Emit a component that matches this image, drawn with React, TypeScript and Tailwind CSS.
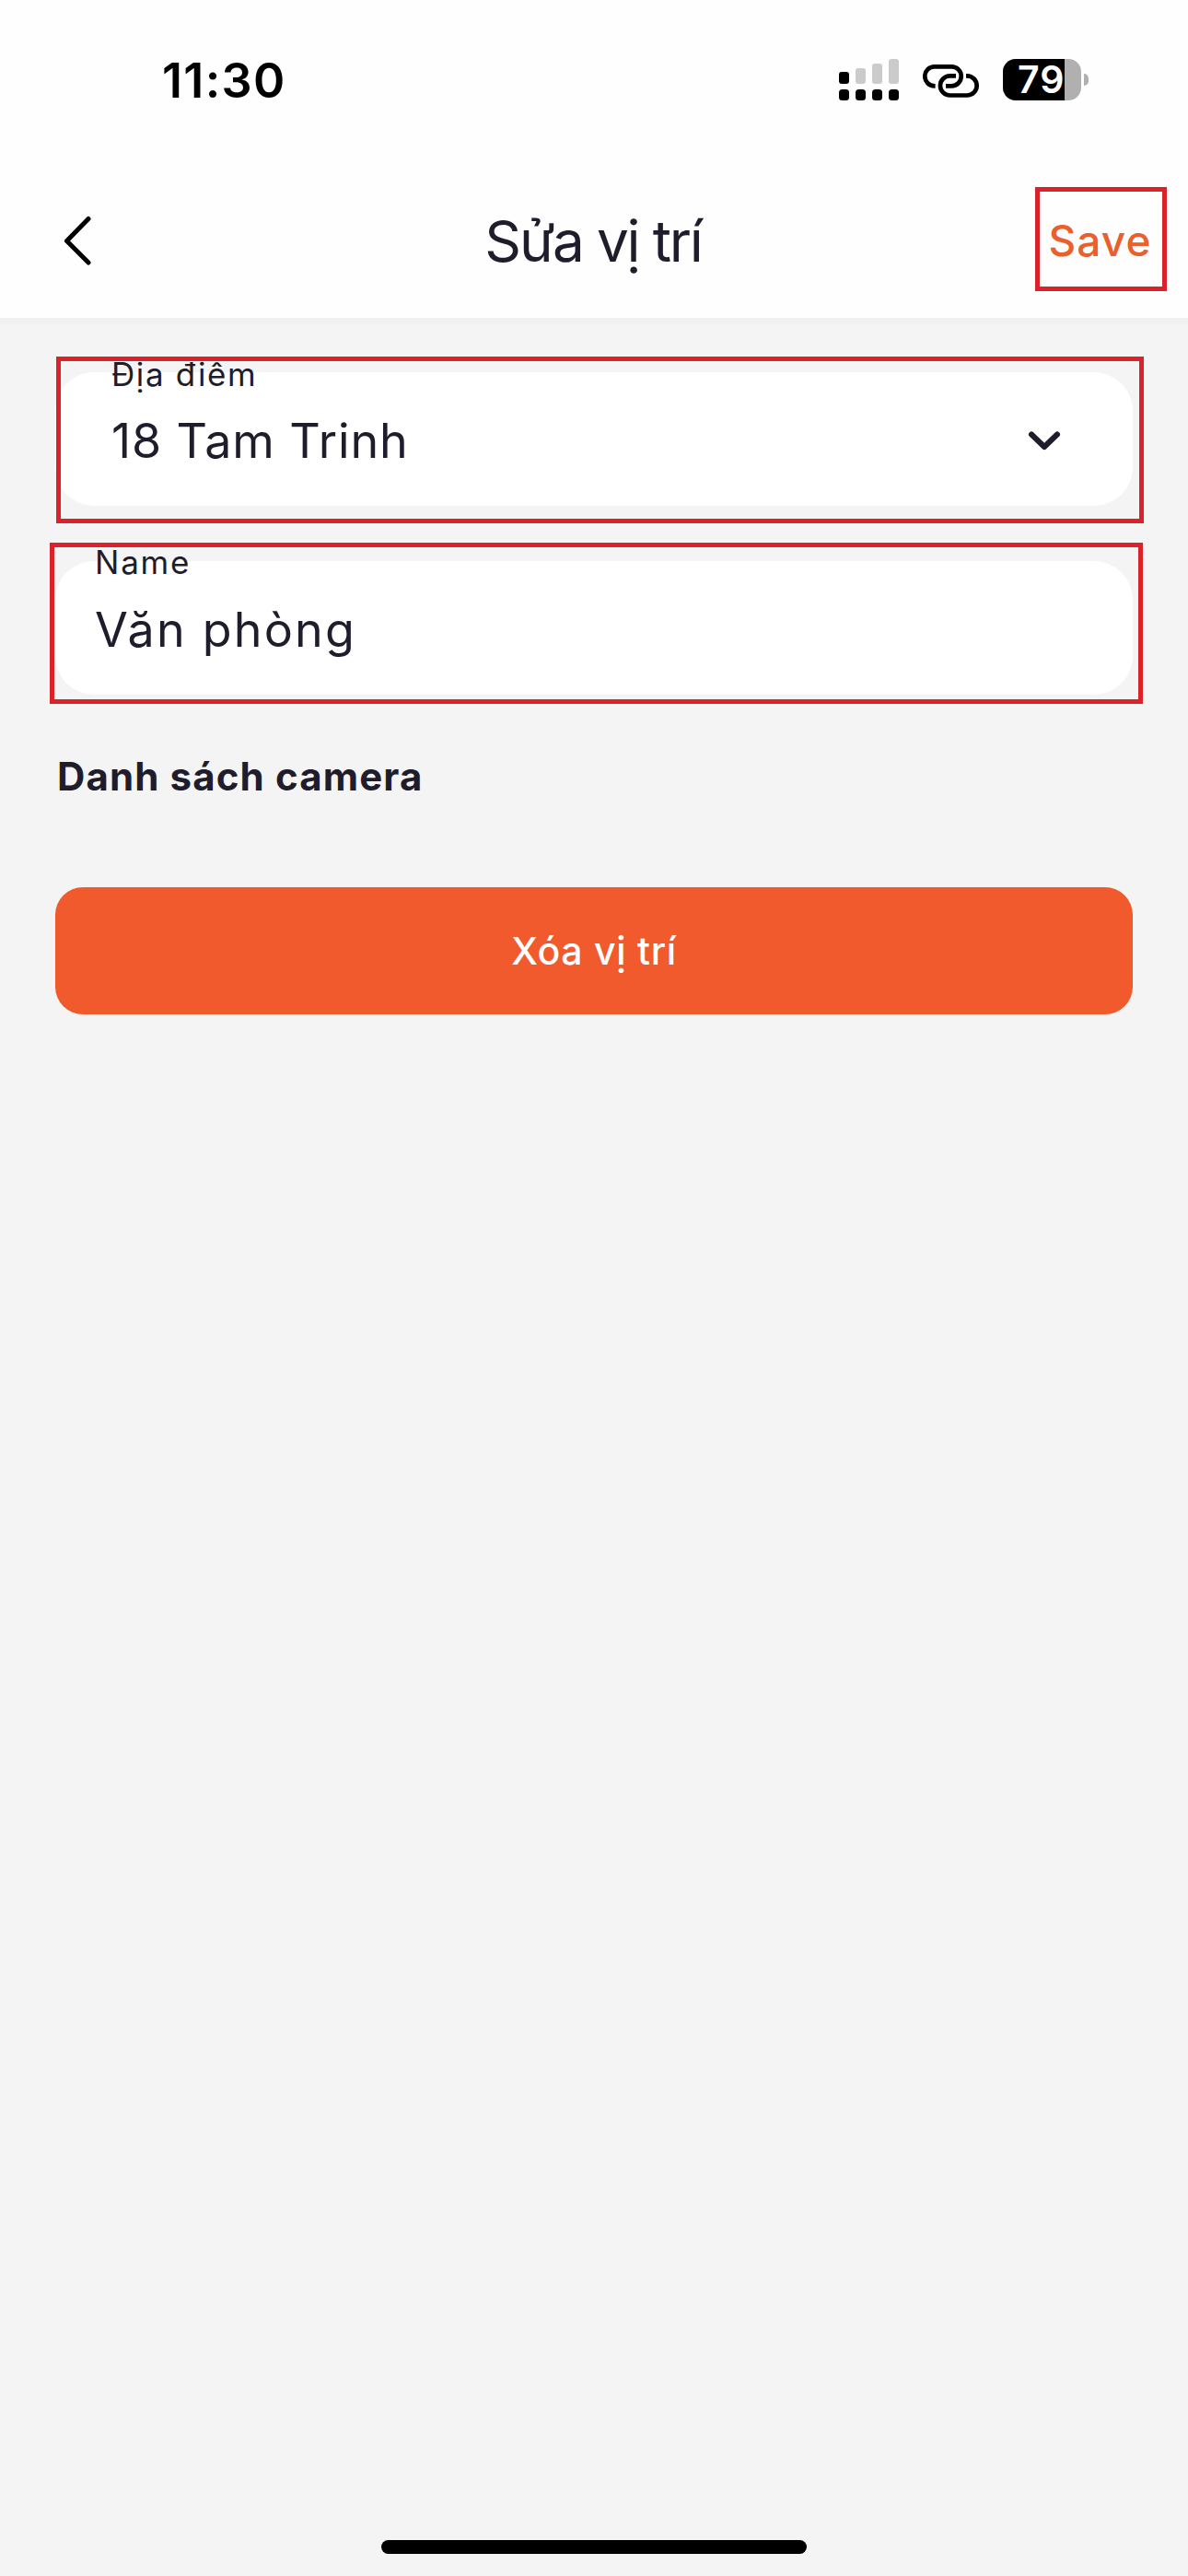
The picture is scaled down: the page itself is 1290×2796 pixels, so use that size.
import { ReactNode, useState } from "react"
import clsx from "clsx"


// // Status bar icons ----->

const signalBars = [
    { x: 0, y: 14, h: 13, on: true },
    { x: 18, y: 10, h: 17, on: false },
    { x: 36, y: 5, h: 22, on: false },
    { x: 54, y: 0, h: 27, on: false },
]

const SignalIcon = () => (
    <svg width="65" height="45" viewBox="0 0 65 45">
        {
            signalBars.map((bar) => (
                <g key={bar.x}>
                    <rect x={bar.x} y={bar.y} width="11" height={bar.h} rx="3" fill={bar.on ? "#000" : "#cbcbcb"} />
                    <rect x={bar.x} y="33" width="11" height="12" rx="3.5" fill="#000" />
                </g>
            ))
        }
    </svg>
)

const LinkIcon = () => (
    <svg width="61" height="36" viewBox="0 0 61 36" fill="none" stroke="#000" strokeWidth="4.7">
        <path d="M13.6 23.3H12.7A10.45 10.45 0 0 1 12.7 2.4H31.3A10.45 10.45 0 0 1 31.3 23.3H25" />
        <path d="M36 12.4H29.5A10.55 10.55 0 0 0 29.5 33.5H48.1A10.55 10.55 0 0 0 48.1 12.4H47" />
    </svg>
)

const Battery = ({ level }: { level: number }) => (
    <div className="flex items-center gap-[3px]">
        <div className="relative flex h-[45px] w-[85px] items-center rounded-[14px] bg-[#b0b0b0] pl-4">
            <div
                className="absolute inset-y-0 left-0 rounded-l-[14px] bg-black"
                style={{ width: `${level}%` }}
            />
            <span className="relative text-[41px] leading-[45px] font-semibold tracking-[1px] text-white">{level}</span>
        </div>
        <div className="h-[13px] w-[5px] rounded-r-full bg-[#b0b0b0]" />
    </div>
)

const StatusBar = () => (
    <div className="flex h-[176px] items-center justify-between pr-[108px] pl-[176px]">
        <p className="text-[52px] leading-[60px] font-semibold tracking-[1.34px] text-black">11:30</p>

        <div className="mb-[3px] flex items-center">
            <SignalIcon />
            <div className="mt-[3px] mr-[26px] ml-[26px]">
                <LinkIcon />
            </div>
            <Battery level={79} />
        </div>
    </div>
)


// // Header with back arrow, title and save ----->

const Header = () => (
    <div className="grid h-[169px] grid-cols-[1fr_auto_1fr] items-center">
        <button className="w-fit pl-[68px]">
            <svg width="32" height="54" viewBox="0 0 32 54" fill="none" stroke="#000" strokeWidth="5" strokeLinecap="round" strokeLinejoin="round">
                <path d="M28 3.5L4.5 27.5L28 51" />
            </svg>
        </button>

        <h1 className="pt-[3px] pr-[2px] text-[62px] leading-[80px] tracking-[-2.2px]">Sửa vị trí</h1>

        <button className="mr-[23px] mb-[2px] flex h-[113px] w-[143px] items-center justify-center justify-self-end border-5 border-[#db222a] pt-[3px] pr-[2px] text-[46px] font-medium tracking-[1.11px] text-[#ea5f2b]">
            Save
        </button>
    </div>
)


type FieldProps = {
    label: string
    value: string
    className?: string
    labelClass: string
    frameClass: string
    icon?: ReactNode
}

const Field = ({ label, value, className, labelClass, frameClass, icon }: FieldProps) => (
    <div className={clsx("relative flex h-[145px] items-center justify-between rounded-[42px] bg-white", className)}>
        <span className={clsx("absolute text-[35px] leading-[42px]", labelClass)}>{label}</span>
        <span className="pt-[4px] text-[52px] leading-[60px]">{value}</span>
        {icon}

        {/* highlight frame, sits above the floating label */}
        <div className={clsx("absolute border-5 border-[#db222a]", frameClass)} />
    </div>
)


const App = () => {

    const [place] = useState("18 Tam Trinh")
    const [name] = useState("Văn phòng")

    return (
        <div className="flex h-[2796px] w-[1290px] flex-col bg-[#f4f4f4] font-['Inter',sans-serif] text-[#1f1d2b]">

            <div className="bg-[#fefefe]">
                <StatusBar />
                <Header />
            </div>
            <div className="h-[7px] bg-[#f0f0f0]" />

            <div className="flex flex-col px-[60px] pt-[52px]">

                <Field
                    label="Địa điểm"
                    value={place}
                    className="pr-[77px] pl-[61px] tracking-[0.87px]"
                    labelClass="-top-[19px] left-[61px] tracking-[1.61px]"
                    frameClass="-top-[17px] -right-[12px] -bottom-[19px] left-[1px]"
                    icon={
                        <svg className="mt-[2px]" width="38" height="24" viewBox="0 0 38 24" fill="none" stroke="#1f1d2b" strokeWidth="6" strokeLinecap="round" strokeLinejoin="round">
                            <path d="M5 5.5L19 19L33 5.5" />
                        </svg>
                    }
                />

                <Field
                    label="Name"
                    value={name}
                    className="mt-[60px] pl-[43px] tracking-[2.22px]"
                    labelClass="-top-[20px] left-[43px] tracking-[1.77px]"
                    frameClass="-top-[20px] -right-[11px] -bottom-[10px] -left-[6px]"
                />

                <h2 className="mt-[64px] pl-[2px] text-[42px] leading-[50px] font-bold tracking-[1.13px]">Danh sách camera</h2>

                <button className="mt-[95px] h-[138px] rounded-[30px] bg-[#f05a2d] pt-[2px] text-[41px] font-medium tracking-[0.72px] text-white">
                    Xóa vị trí
                </button>
            </div>

            {/* home indicator */}
            <div className="mx-auto mt-auto mb-6 h-[15px] w-[462px] rounded-full bg-black" />
        </div>
    )
}

export default App
